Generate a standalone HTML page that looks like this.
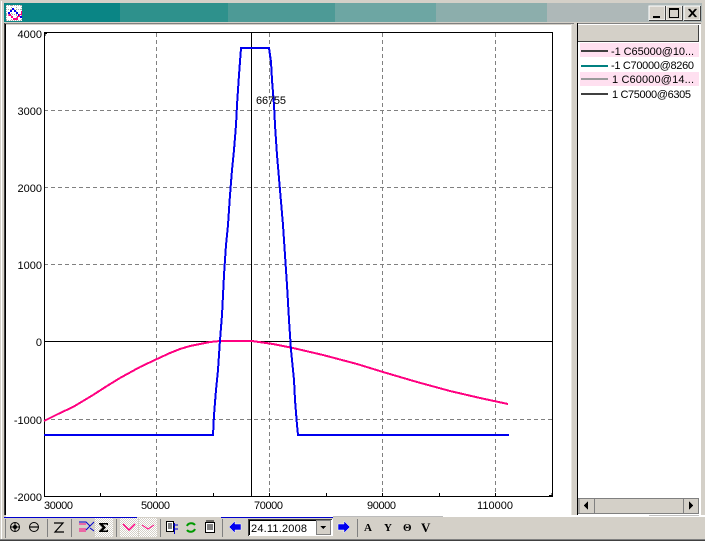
<!DOCTYPE html>
<html><head><meta charset="utf-8"><style>
html,body{margin:0;padding:0;width:705px;height:541px;overflow:hidden;background:#d4d0c8}
svg{display:block}
text{font-family:"Liberation Sans",sans-serif;font-size:11px;fill:#000}
</style></head><body>
<svg width="705" height="541" viewBox="0 0 705 541" xmlns="http://www.w3.org/2000/svg" shape-rendering="crispEdges">
<defs>
<pattern id="dith" width="2" height="2" patternUnits="userSpaceOnUse">
<rect width="2" height="2" fill="#fff"/>
<rect width="1" height="1" fill="#d4d0c8"/>
<rect x="1" y="1" width="1" height="1" fill="#d4d0c8"/>
</pattern>
</defs>
<rect width="705" height="541" fill="#d4d0c8"/>
<rect x="1" y="1" width="1" height="539" fill="#fff"/>
<rect x="4" y="3" width="116" height="19" fill="#0a8585"/>
<rect x="120" y="3" width="108" height="19" fill="#2e918c"/>
<rect x="228" y="3" width="107" height="19" fill="#4d9a96"/>
<rect x="335" y="3" width="101" height="19" fill="#6da6a3"/>
<rect x="436" y="3" width="111" height="19" fill="#8caeac"/>
<rect x="547" y="3" width="155" height="19" fill="#aeb8b8"/>
<!-- app icon -->
<rect x="6" y="5" width="16" height="16" fill="#fff"/>
<path d="M6 5.500h16M6 20.500h16M6.500 5v16M21.500 5v16M6 9.500h16M6 14.500h16M11.500 5v16M16.500 5v16" stroke="#aaa" stroke-dasharray="1 1" fill="none"/>
<path d="M8 12h2v-2h2v-2h2v2h2v2h2v2h2v2h2v2h-2v-2h-2v-2h-2v-2h-2v-2h-2v2h-2v2h-2z" fill="#0000ee"/>
<path d="M9 14h2v2h2v2h4v-2h2v-2h2v-3h1v4h-2v2h-2v3h-5v-2h-2v-2h-3z" fill="#ff0080"/>
<!-- window buttons -->
<g>
<rect x="649" y="6" width="16" height="14" fill="#d4d0c8" stroke="#fff"/>
<rect x="666" y="6" width="16" height="14" fill="#d4d0c8" stroke="#fff"/>
<rect x="684" y="6" width="16" height="14" fill="#d4d0c8" stroke="#fff"/>
<path d="M649 20.500h16.500V6M666 20.500h16.500V6M684 20.500h16.500V6" stroke="#404040" fill="none"/>
<rect x="653" y="16" width="7" height="2" fill="#000"/>
<rect x="669.500" y="8.500" width="9" height="9" fill="none" stroke="#000"/>
<rect x="669" y="8" width="10" height="2" fill="#000"/>
<path d="M688.500 9L695.500 17M689.500 9L696.500 17M695.500 9L688.500 17M696.500 9L689.500 17" stroke="#000" shape-rendering="auto"/>
</g>
<!-- left frame / chart background -->
<rect x="4" y="23" width="570" height="1" fill="#808080"/>
<rect x="4" y="23" width="1" height="492" fill="#404040"/>
<rect x="5" y="24" width="1" height="491" fill="#000"/>
<rect x="6" y="25" width="567" height="490" fill="#fff"/>
<rect x="572" y="24" width="2" height="491" fill="#d4d0c8"/>
<rect x="571" y="24" width="1" height="491" fill="#e8e6e0"/>
<!-- grid -->
<g stroke="#808080" stroke-dasharray="4 3" fill="none">
<path d="M44 110.500H553M44 187.500H553M44 264.500H553M44 419.500H553"/>
<path d="M156.500 33V496M269.500 33V496M382.500 33V496M495.500 33V496"/>
</g>
<!-- frame -->
<rect x="44.500" y="32.500" width="508" height="464" fill="none" stroke="#000"/>
<path d="M44 33.500h3M45 33v3M552 493v3M549 495.500h3M100.500 493v3M156.500 493v3M213.500 493v3M269.500 493v3M326.500 493v3M382.500 493v3M439.500 493v3M495.500 493v3" stroke="#000" fill="none"/>
<path d="M44 341.500H553M251.500 33V496" stroke="#000" fill="none"/>
<!-- curves -->
<polyline fill="none" stroke="#ff0080" stroke-width="2" points="44,421 58,414 73,407 93,395 107,386 120,378 140,367 157,359 170,353 180,349 190,346 200,344 210,342 220,341 252,341 273,344 293,348 323,355 357,364 383,372 417,382 450,391 480,398 508,404"/>
<polyline fill="none" stroke="#0000ee" stroke-width="2" points="44,435 213,435 214,415 216,390 218,370 220,340 222,315 224,275 226,245 228,225 230,195 232,170 234,150 236,125 237,105 239,75 241,48 269,48 271,62 272,80 274,105 275,125 277,155 280,190 283,225 285,255 287,285 289,320 291,350 294,380 295,400 297,425 298,435 509,435"/>
<!-- axis labels -->
<g text-anchor="end">
<text x="42" y="38">4000</text>
<text x="42" y="115">3000</text>
<text x="42" y="192">2000</text>
<text x="42" y="269">1000</text>
<text x="42" y="346">0</text>
<text x="42" y="424">-1000</text>
<text x="42" y="501">-2000</text>
</g>
<g text-anchor="start">
<text x="44" y="509" textLength="29">30000</text>
<text x="141" y="509" textLength="29">50000</text>
<text x="254" y="509" textLength="29">70000</text>
<text x="367" y="509" textLength="29">90000</text>
<text x="477" y="509" textLength="36">110000</text>
<text x="256" y="104" textLength="30">66755</text>
</g>
<!-- legend panel -->
<rect x="577" y="23" width="124" height="492" fill="#fff"/>
<rect x="577" y="23" width="124" height="1" fill="#808080"/>
<rect x="577" y="23" width="1" height="492" fill="#000"/>
<rect x="578" y="25" width="121" height="16" fill="#d4d0c8"/>
<path d="M578 41.500h121M698.500 25v16" stroke="#404040" fill="none"/>
<rect x="580" y="43" width="119" height="14" fill="#ffe0f0"/>
<rect x="580" y="72" width="119" height="14" fill="#ffe0f0"/>
<rect x="581" y="50" width="27" height="2" fill="#404040"/>
<rect x="581" y="65" width="27" height="2" fill="#008080"/>
<rect x="581" y="78" width="27" height="2" fill="#9a9a9a"/>
<rect x="581" y="93" width="27" height="2" fill="#404040"/>
<text x="611" y="55" textLength="83">-1 C65000@10...</text>
<text x="611" y="69" textLength="83">-1 C70000@8260</text>
<text x="612" y="83" textLength="82">1 C60000@14...</text>
<text x="612" y="98" textLength="79">1 C75000@6305</text>
<!-- scrollbar -->
<rect x="578" y="498" width="121" height="16" fill="#d4d0c8"/>
<path d="M578 498.500H699M578 513.500H699M579 498v16M594.500 498v16M683.500 498v16M698.500 498v16" stroke="#808080" fill="none"/>
<path d="M588 501v9l-4-4.500z" fill="#000"/>
<path d="M689 501v9l4-4.500z" fill="#000"/>
<!-- bottom band -->
<rect x="6" y="515" width="699" height="2" fill="#fff"/>
<rect x="4" y="517" width="133" height="1" fill="#0000cc"/>
<rect x="221" y="517" width="112" height="1" fill="#0000cc"/>
<rect x="333" y="516" width="110" height="1" fill="#777" opacity=".5"/>
<rect x="649" y="515" width="50" height="1" fill="#999" opacity=".6"/>
<rect x="0" y="539" width="705" height="1" fill="#808080"/>
<rect x="0" y="540" width="705" height="1" fill="#404040"/>
<!-- toolbar -->
<g stroke="#808080" fill="none">
<path d="M5.500 519v19M47.500 519v18M71.500 519v18M116.500 519v18M160.500 519v18M222.500 519v18M357.500 519v18"/>
</g>
<g shape-rendering="auto" fill="none" stroke="#000">
<circle cx="15" cy="527" r="4.500"/>
<path d="M10.500 527h9M15 522.500v9"/>
<circle cx="15" cy="527" r="2" fill="#000" stroke="none"/>
<circle cx="34" cy="527" r="4.500"/>
<path d="M30 527h8" stroke-width="1.200"/>
<path d="M54 523h9l-8 9h9" stroke-width="1.200"/>
</g>
<path d="M79 524h7M79 529h7M79 531h7" stroke="#ff0080" fill="none"/>
<path d="M79 522h7l4 4l-4 4M90 526l4-4M90 528l4 3" stroke="#0000cc" fill="none" shape-rendering="auto"/>
<rect x="95" y="518" width="18" height="19" fill="url(#dith)"/>
<path d="M99 523h9v2.500l-1.500-1h-3.500l3 3-3 3h3.500l1.500-1v2.500h-9v-1l3.500-3.500-3.500-3.500z" fill="#000" shape-rendering="auto"/>
<rect x="120" y="518" width="18" height="19" fill="url(#dith)"/>
<rect x="139" y="518" width="18" height="19" fill="url(#dith)"/>
<path d="M123 524l6 6 6-6" stroke="#ff0080" stroke-width="1.500" fill="none" shape-rendering="auto"/>
<path d="M142 525l6 4 6-4" stroke="#ff0080" fill="none" shape-rendering="auto"/>
<rect x="166.500" y="521.500" width="7" height="10" fill="#fff" stroke="#000"/>
<path d="M168 524h4M168 526h4M168 528h4" stroke="#000" fill="none"/>
<path d="M173 525h5M173 529h5M174.500 523v11" stroke="#0000cc" fill="none"/>
<path d="M187 526a4.500 4 0 0 1 8-1M195 529a4.500 4 0 0 1-8 1" stroke="#009900" stroke-width="2" fill="none" shape-rendering="auto"/>
<rect x="205.500" y="522.500" width="9" height="10" fill="#fff" stroke="#000"/>
<path d="M206 521h8M207 525h6M207 527h6M207 529h6" stroke="#000" fill="none"/>
<path d="M229 527l6-6v3h6v6h-6v3z" fill="#0000ee" stroke="#fff" stroke-width=".5" shape-rendering="auto"/>
<!-- date -->
<rect x="248" y="519" width="85" height="17" fill="#fff"/>
<path d="M248.500 536V519.500H332" stroke="#404040" fill="none"/>
<path d="M249 520.500H331M249.500 521V535" stroke="#000" fill="none"/>
<rect x="316.500" y="520.500" width="14" height="14" fill="#d4d0c8" stroke="#808080"/>
<path d="M320 526h6l-3 3z" fill="#000"/>
<text x="251" y="532" textLength="56">24.11.2008</text>
<path d="M350 527l-6-6v3h-6v6h6v3z" fill="#0000ee" stroke="#fff" stroke-width=".5" shape-rendering="auto"/>
<text x="364" y="531" style="font-family:'Liberation Serif',serif;font-size:11px;font-weight:bold">A</text>
<text x="384" y="531" style="font-family:'Liberation Serif',serif;font-size:11px;font-weight:bold">Y</text>
<text x="403" y="531" style="font-family:'Liberation Serif',serif;font-size:11px;font-weight:bold">Θ</text>
<text x="421" y="532" style="font-family:'Liberation Serif',serif;font-size:13px;font-weight:bold">V</text>
</svg>
</body></html>
